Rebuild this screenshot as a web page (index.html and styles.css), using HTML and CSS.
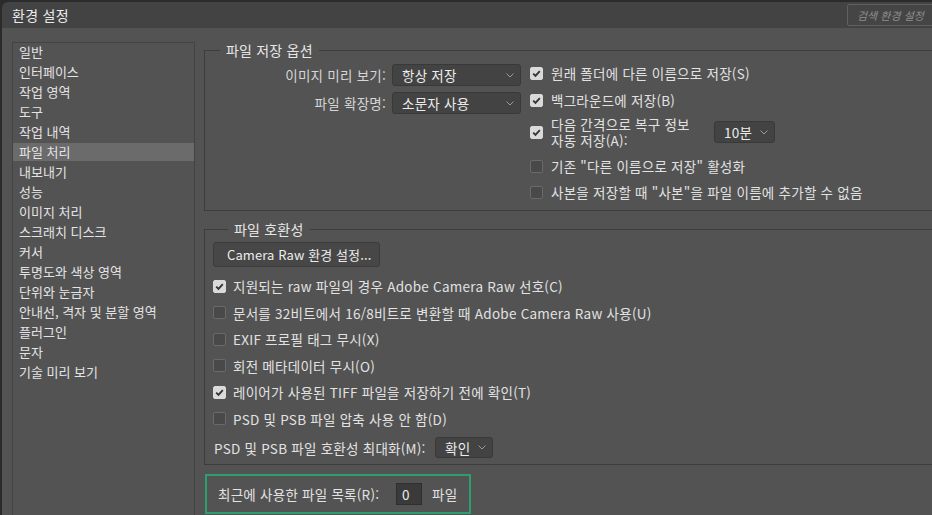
FILE: index.html
```html
<!DOCTYPE html>
<html lang="ko">
<head>
<meta charset="utf-8">
<title>환경 설정</title>
<link rel="stylesheet" href="styles.css">
</head>
<body>
<div class="window">
  <header class="titlebar">
    <span class="title">환경 설정</span>
    <div class="search">검색 환경 설정</div>
  </header>
  <div class="main">
    <nav class="sidebar">
      <div class="nav-item">일반</div>
      <div class="nav-item">인터페이스</div>
      <div class="nav-item">작업 영역</div>
      <div class="nav-item">도구</div>
      <div class="nav-item">작업 내역</div>
      <div class="nav-item selected">파일 처리</div>
      <div class="nav-item">내보내기</div>
      <div class="nav-item">성능</div>
      <div class="nav-item">이미지 처리</div>
      <div class="nav-item">스크래치 디스크</div>
      <div class="nav-item">커서</div>
      <div class="nav-item">투명도와 색상 영역</div>
      <div class="nav-item">단위와 눈금자</div>
      <div class="nav-item">안내선, 격자 및 분할 영역</div>
      <div class="nav-item">플러그인</div>
      <div class="nav-item">문자</div>
      <div class="nav-item">기술 미리 보기</div>
    </nav>
    <div class="content">
      <fieldset class="group group-save">
        <legend>파일 저장 옵션</legend>
        <div class="save-cols">
          <div class="save-left">
            <div class="field-row">
              <span class="field-label">이미지 미리 보기:</span>
              <div class="select select-wide"><span>항상 저장</span><svg class="chev" width="8" height="5" viewBox="0 0 8 5"><path d="M0.5 0.5 L4 4 L7.5 0.5" fill="none" stroke="#9a9a9a" stroke-width="1"/></svg></div>
            </div>
            <div class="field-row">
              <span class="field-label">파일 확장명:</span>
              <div class="select select-wide"><span>소문자 사용</span><svg class="chev" width="8" height="5" viewBox="0 0 8 5"><path d="M0.5 0.5 L4 4 L7.5 0.5" fill="none" stroke="#9a9a9a" stroke-width="1"/></svg></div>
            </div>
          </div>
          <div class="save-right">
            <div class="check-row save-row">
              <span class="cb on"><svg width="13" height="13" viewBox="0 0 13 13"><path d="M3.2 6.6 L5.5 8.9 L9.8 4.2" fill="none" stroke="#353535" stroke-width="1.9"/></svg></span>
              <span>원래 폴더에 다른 이름으로 저장(S)</span>
            </div>
            <div class="check-row save-row row-gap1">
              <span class="cb on"><svg width="13" height="13" viewBox="0 0 13 13"><path d="M3.2 6.6 L5.5 8.9 L9.8 4.2" fill="none" stroke="#353535" stroke-width="1.9"/></svg></span>
              <span>백그라운드에 저장(B)</span>
            </div>
            <div class="check-row save-row row-tall">
              <span class="cb on"><svg width="13" height="13" viewBox="0 0 13 13"><path d="M3.2 6.6 L5.5 8.9 L9.8 4.2" fill="none" stroke="#353535" stroke-width="1.9"/></svg></span>
              <span class="two-line">다음 간격으로 복구 정보<br>자동 저장(A):</span>
              <div class="select select-min"><span>10분</span><svg class="chev" width="8" height="5" viewBox="0 0 8 5"><path d="M0.5 0.5 L4 4 L7.5 0.5" fill="none" stroke="#9a9a9a" stroke-width="1"/></svg></div>
            </div>
            <div class="check-row save-row row-gap3">
              <span class="cb"></span>
              <span>기존 "다른 이름으로 저장" 활성화</span>
            </div>
            <div class="check-row save-row">
              <span class="cb"></span>
              <span>사본을 저장할 때 "사본"을 파일 이름에 추가할 수 없음</span>
            </div>
          </div>
        </div>
      </fieldset>

      <fieldset class="group group-compat">
        <legend>파일 호환성</legend>
        <button class="btn" type="button">Camera Raw 환경 설정...</button>
        <div class="compat-list">
          <div class="check-row compat-row">
            <span class="cb on"><svg width="13" height="13" viewBox="0 0 13 13"><path d="M3.2 6.6 L5.5 8.9 L9.8 4.2" fill="none" stroke="#353535" stroke-width="1.9"/></svg></span>
            <span>지원되는 raw 파일의 경우 Adobe Camera Raw 선호(C)</span>
          </div>
          <div class="check-row compat-row">
            <span class="cb"></span>
            <span>문서를 32비트에서 16/8비트로 변환할 때 Adobe Camera Raw 사용(U)</span>
          </div>
          <div class="check-row compat-row">
            <span class="cb"></span>
            <span>EXIF 프로필 태그 무시(X)</span>
          </div>
          <div class="check-row compat-row">
            <span class="cb"></span>
            <span>회전 메타데이터 무시(O)</span>
          </div>
          <div class="check-row compat-row">
            <span class="cb on"><svg width="13" height="13" viewBox="0 0 13 13"><path d="M3.2 6.6 L5.5 8.9 L9.8 4.2" fill="none" stroke="#353535" stroke-width="1.9"/></svg></span>
            <span>레이어가 사용된 TIFF 파일을 저장하기 전에 확인(T)</span>
          </div>
          <div class="check-row compat-row">
            <span class="cb"></span>
            <span>PSD 및 PSB 파일 압축 사용 안 함(D)</span>
          </div>
        </div>
        <div class="max-row">
          <span class="max-label">PSD 및 PSB 파일 호환성 최대화(M):</span>
          <div class="select select-small"><span>확인</span><svg class="chev" width="8" height="5" viewBox="0 0 8 5"><path d="M0.5 0.5 L4 4 L7.5 0.5" fill="none" stroke="#9a9a9a" stroke-width="1"/></svg></div>
        </div>
      </fieldset>

      <div class="recent">
        <span class="recent-label">최근에 사용한 파일 목록(R):</span>
        <div class="num-input">0</div>
        <span class="recent-unit">파일</span>
      </div>
    </div>
  </div>
</div>
</body>
</html>
```

FILE: styles.css
```css
* { box-sizing: border-box; }

html, body {
  margin: 0;
  padding: 0;
  width: 932px;
  height: 515px;
  overflow: hidden;
  background: #2b2b2b;
  font-family: "Noto Sans CJK KR", "Noto Sans", sans-serif;
  font-size: 13px;
  color: #e2e2e2;
}

.window {
  width: 932px;
  height: 515px;
  padding-top: 2px;
  border-left: 2px solid #2b2b2b;
  overflow: hidden;
}

.titlebar {
  height: 26px;
  background: #434343;
  border-top-left-radius: 6px;
  display: flex;
  align-items: center;
  justify-content: space-between;
  padding-left: 10px;
}

.title {
  font-size: 14px;
  letter-spacing: 0.3px;
  color: #ececec;
  line-height: 18px;
}

.search {
  width: 95px;
  height: 22px;
  margin-right: -10px;
  border: 1px solid #606060;
  border-radius: 2px;
  background: #454545;
  color: #8e8e8e;
  font-size: 11px;
  font-style: italic;
  line-height: 20px;
  padding-left: 9px;
  white-space: nowrap;
}

.main {
  height: 487px;
  background: #535353;
  display: flex;
  align-items: flex-start;
  padding: 14px 0 0 10px;
}

.sidebar {
  flex: 0 0 183px;
  height: 480px;
  border: 1px solid #434343;
  border-bottom: none;
  font-size: 13px;
}

.nav-item {
  height: 18px;
  margin-bottom: 2px;
  line-height: 18px;
  padding-left: 6px;
  white-space: nowrap;
  color: #e4e4e4;
}

.nav-item.selected {
  background: #6b6b6b;
}

.content {
  flex: 0 0 760px;
  margin-left: 9px;
  display: flex;
  flex-direction: column;
  font-size: 13.5px;
  letter-spacing: 0.25px;
}

.group {
  margin: 0;
  padding: 0;
  border: 1px solid #3d3d3d;
  min-width: 0;
}

.group legend {
  margin-left: 15px;
  padding: 0 6px;
  font-size: 14px;
  line-height: 16px;
  letter-spacing: 0.2px;
  color: #e6e6e6;
}

.group-save {
  padding-bottom: 5px;
}

.save-cols {
  display: flex;
  align-items: flex-start;
}

.save-left {
  width: 316px;
  padding-top: 6px;
  display: flex;
  flex-direction: column;
  gap: 6px;
}

.field-row {
  display: flex;
  align-items: center;
  gap: 6px;
}

.field-label {
  width: 181px;
  text-align: right;
  color: #d6d6d6;
  white-space: nowrap;
}

.select {
  display: flex;
  align-items: center;
  justify-content: space-between;
  background: #434343;
  border: 1px solid #393939;
  border-radius: 3px;
  padding: 0 6px 0 9px;
  color: #ececec;
}

.select-wide {
  width: 129px;
  height: 22px;
}

.select-min {
  width: 61px;
  height: 22px;
}

.select-small {
  width: 58px;
  height: 21px;
}

.chev {
  display: block;
  flex: 0 0 auto;
}

.save-right {
  margin-left: 9px;
  padding-top: 2px;
  display: flex;
  flex-direction: column;
}

.check-row {
  display: flex;
  align-items: center;
  white-space: nowrap;
}

.save-row {
  height: 26px;
  gap: 8px;
}

.row-gap1 { margin-top: 1px; }

.row-tall {
  height: 36px;
  margin-top: 1px;
}

.row-gap3 { margin-top: 3px; }

.two-line {
  width: 155px;
  line-height: 16px;
}

.cb {
  flex: 0 0 13px;
  width: 13px;
  height: 13px;
  border-radius: 2px;
  background: #494949;
  border: 1px solid #6a6a6a;
  display: block;
}

.cb svg {
  display: block;
  margin: -1px;
}

.cb.on {
  background: #dadada;
  border-color: #dadada;
}

.group-compat {
  margin-top: 10px;
  padding: 5px 0 6px 8px;
}

.btn {
  display: block;
  width: 167px;
  height: 25px;
  margin: 0;
  padding: 0 0 0 13px;
  text-align: left;
  background: #474747;
  border: 1px solid #3c3c3c;
  border-radius: 3px;
  font-family: inherit;
  font-size: 13px;
  letter-spacing: 0.1px;
  color: #ececec;
  white-space: nowrap;
}

.compat-list {
  margin-top: 6px;
  display: flex;
  flex-direction: column;
}

.compat-row {
  height: 26.5px;
  gap: 7px;
}

.max-row {
  margin-top: 5px;
  display: flex;
  align-items: center;
  padding-left: 1px;
}

.max-label {
  width: 221px;
  white-space: nowrap;
}

.recent {
  margin: 9px 0 0 1px;
  width: 266px;
  height: 40px;
  border: 2px solid #2ba06c;
  display: flex;
  align-items: center;
  padding-left: 11px;
}

.recent-label {
  width: 178px;
  white-space: nowrap;
}

.num-input {
  width: 26px;
  height: 22px;
  background: #3a3a3a;
  border: 1px solid #2f2f2f;
  padding-left: 5px;
  line-height: 20px;
  color: #ececec;
}

.recent-unit {
  margin-left: 10px;
}
```
